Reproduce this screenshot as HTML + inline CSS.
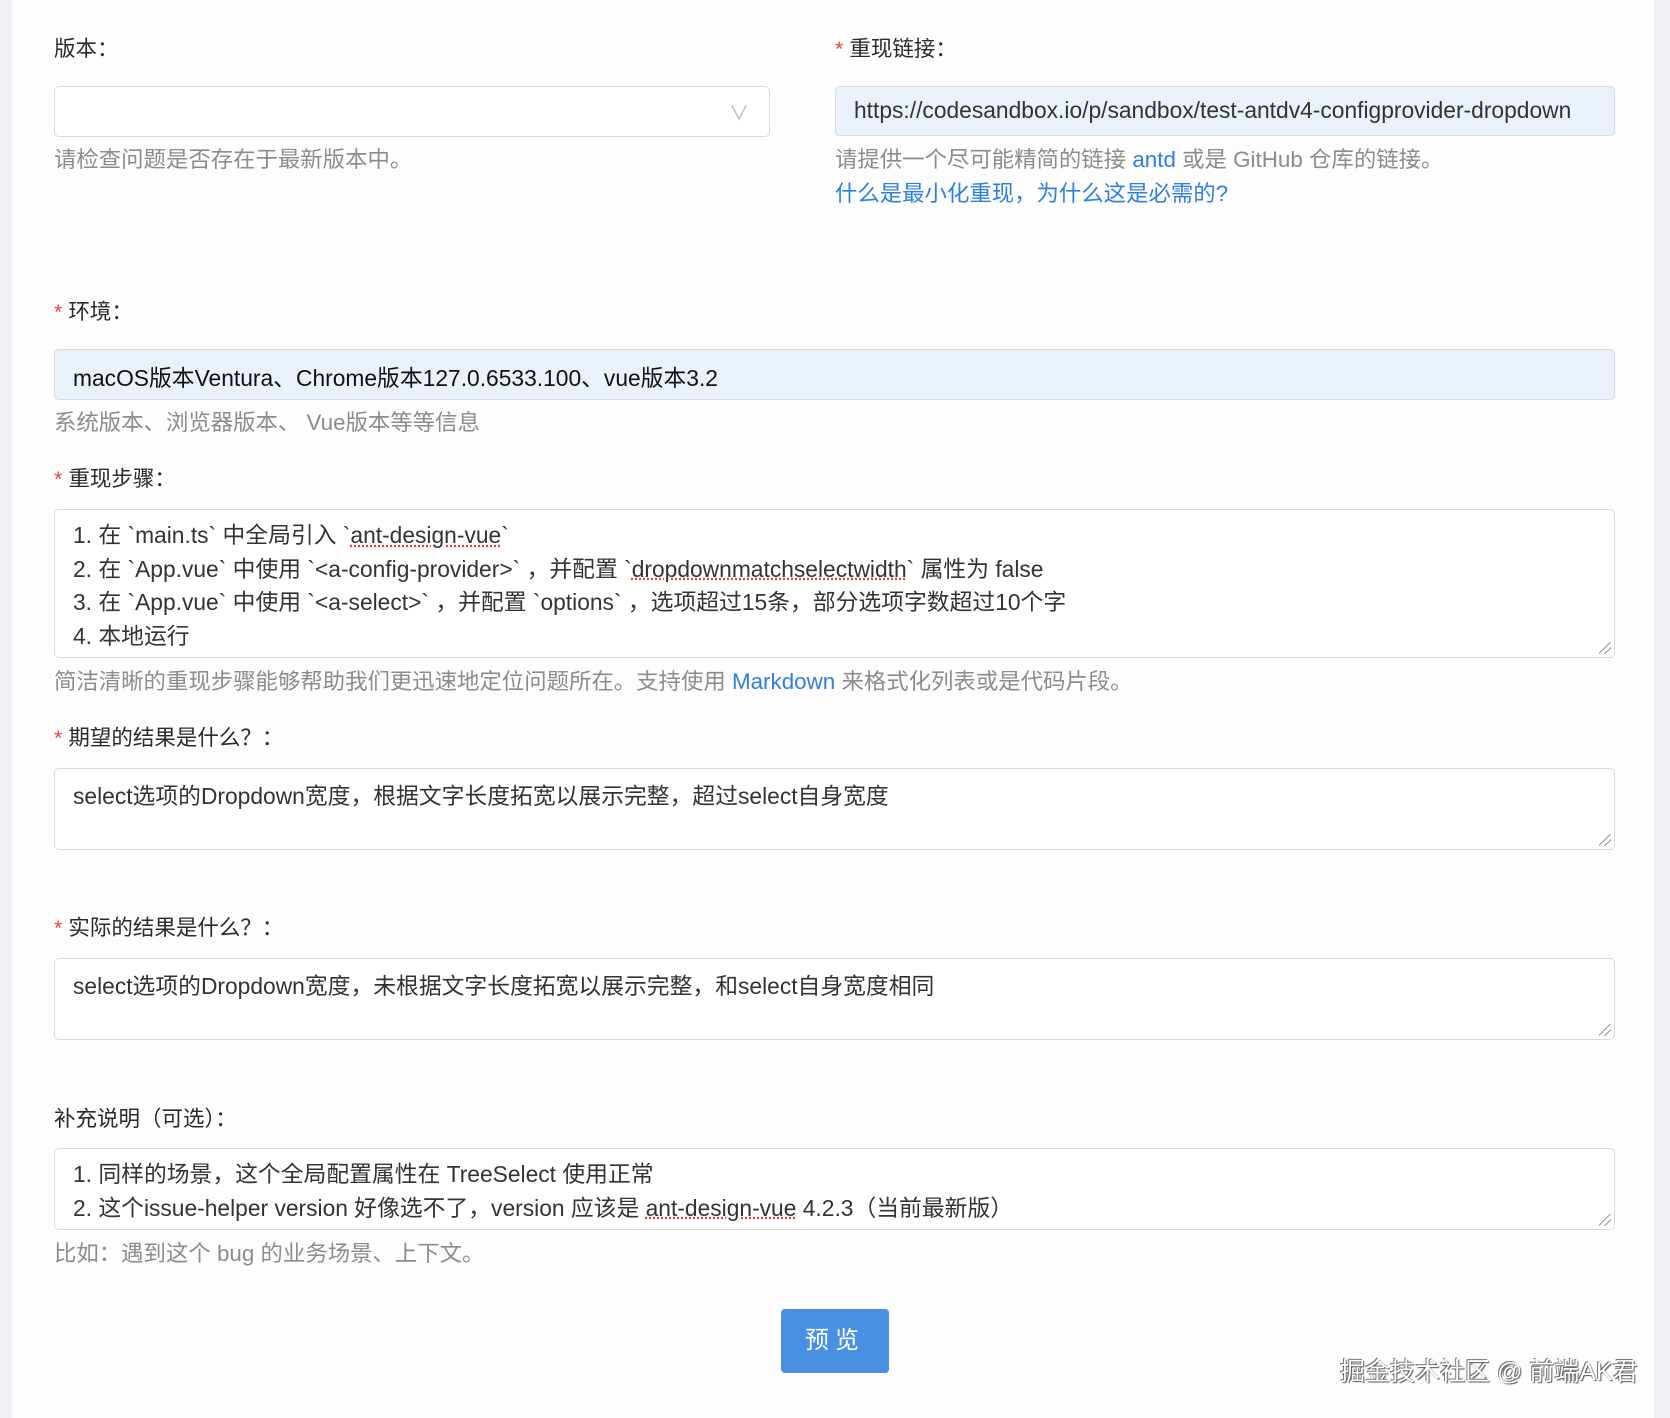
<!DOCTYPE html><html><head><meta charset="utf-8"><style>
*{box-sizing:border-box;margin:0;padding:0}
body{width:1670px;height:1418px;background:#fdfdfd;font-family:"Liberation Sans","Noto Sans CJK SC",sans-serif;position:relative;overflow:hidden;color:#333}
.ls{position:absolute;left:0;top:0;width:12px;height:1418px;background:#eef0f3}
.rs{position:absolute;right:0;top:0;width:16px;height:1418px;background:#eef0f3}
.a{position:absolute;white-space:nowrap}
.lab{font-size:21.5px;color:#2a2a2a}
.req:before{content:"* ";color:#e8453c}
.help{font-size:22.4px;color:#8c8c8c}
.box{position:absolute;border:1px solid #d9d9d9;border-radius:5px;background:#fff}
.txt{font-size:22.8px;color:#333;position:absolute;left:18px}
.blue{color:#2f7fe0}
.rz{position:absolute;right:3px;bottom:3px;width:12px;height:12px;background:linear-gradient(135deg,transparent 45%,#999 45%,#999 52%,transparent 52%,transparent 70%,#999 70%,#999 77%,transparent 77%)}
u{text-decoration:underline dotted #e04040}
</style></head><body>
<div class="ls"></div><div class="rs"></div>
<div class="a lab" style="left:54px;top:32px">版本：</div>
<div class="box" style="left:54px;top:86px;width:716px;height:51px"><div class="a" style="right:20px;top:10px;color:#bbb;font-size:20px">∨</div></div>
<div class="a help" style="left:54px;top:142px">请检查问题是否存在于最新版本中。</div>
<div class="a lab req" style="left:835px;top:32px">重现链接：</div>
<div class="box" style="left:835px;top:86px;width:780px;height:50px;background:#eaf1fb;overflow:hidden"><div class="txt" style="top:10px">https://codesandbox.io/p/sandbox/test-antdv4-configprovider-dropdown</div></div>
<div class="a help" style="left:835px;top:142px">请提供一个尽可能精简的链接 <span class="blue">antd</span> 或是 GitHub 仓库的链接。</div>
<div class="a help blue" style="left:835px;top:176px">什么是最小化重现，为什么这是必需的?</div>
<div class="a lab req" style="left:54px;top:295px">环境：</div>
<div class="box" style="left:54px;top:349px;width:1561px;height:51px;background:#eaf1fb"><div class="txt" style="top:10px;color:#111">macOS版本Ventura、Chrome版本127.0.6533.100、vue版本3.2</div></div>
<div class="a help" style="left:54px;top:405px">系统版本、浏览器版本、 Vue版本等等信息</div>
<div class="a lab req" style="left:54px;top:462px">重现步骤：</div>
<div class="box" style="left:54px;top:509px;width:1561px;height:149px"><div class="txt" style="top:9px;line-height:33.5px">1. 在 `main.ts` 中全局引入 `<u>ant-design-vue</u>`<br>2. 在 `App.vue` 中使用 `&lt;a-config-provider&gt;` ，并配置 `<u>dropdownmatchselectwidth</u>` 属性为 false<br>3. 在 `App.vue` 中使用 `&lt;a-select&gt;` ，并配置 `options` ，选项超过15条，部分选项字数超过10个字<br>4. 本地运行</div><div class="rz"></div></div>
<div class="a help" style="left:54px;top:664px">简洁清晰的重现步骤能够帮助我们更迅速地定位问题所在。支持使用 <span class="blue">Markdown</span> 来格式化列表或是代码片段。</div>
<div class="a lab req" style="left:54px;top:721px">期望的结果是什么？：</div>
<div class="box" style="left:54px;top:768px;width:1561px;height:82px"><div class="txt" style="top:9px">select选项的Dropdown宽度，根据文字长度拓宽以展示完整，超过select自身宽度</div><div class="rz"></div></div>
<div class="a lab req" style="left:54px;top:911px">实际的结果是什么？：</div>
<div class="box" style="left:54px;top:958px;width:1561px;height:82px"><div class="txt" style="top:9px">select选项的Dropdown宽度，未根据文字长度拓宽以展示完整，和select自身宽度相同</div><div class="rz"></div></div>
<div class="a lab" style="left:54px;top:1102px">补充说明（可选）：</div>
<div class="box" style="left:54px;top:1148px;width:1561px;height:82px"><div class="txt" style="top:9px;line-height:33.5px">1. 同样的场景，这个全局配置属性在 TreeSelect 使用正常<br>2. 这个issue-helper version 好像选不了，version 应该是 <u>ant-design-vue</u> 4.2.3（当前最新版）</div><div class="rz"></div></div>
<div class="a help" style="left:54px;top:1236px">比如：遇到这个 bug 的业务场景、上下文。</div>
<div class="a" style="left:781px;top:1309px;width:108px;height:64px;background:#4a90e2;border-radius:4px;color:#fff;font-size:24px;text-align:center;line-height:64px;letter-spacing:6px">预览</div>
<div class="a" style="left:1340px;top:1352px;font-size:25px;color:#fff;text-shadow:1px 1px 1px #555,-1px -1px 0 #777">掘金技术社区 @ 前端AK君</div>
</body></html>
